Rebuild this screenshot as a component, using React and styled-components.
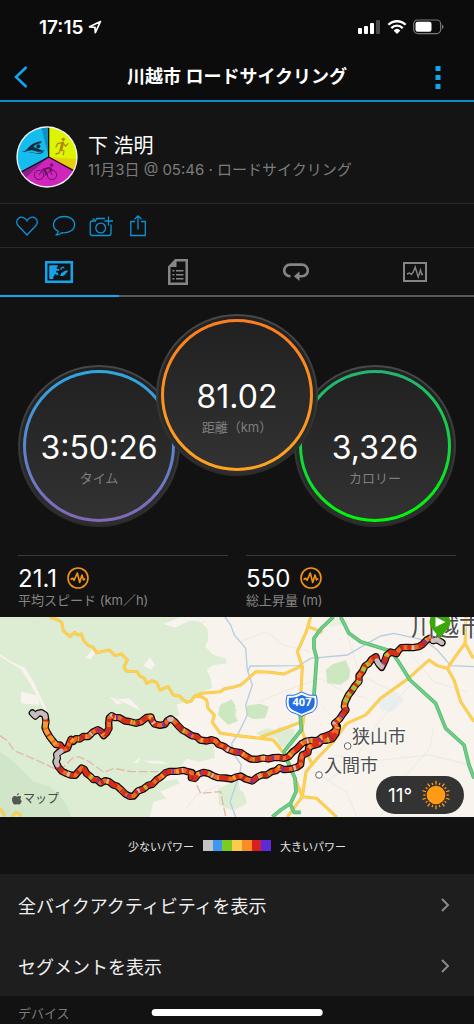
import React, { useState } from "react";
import styled, { createGlobalStyle } from "styled-components";

const routeUpper =
  "M1326,83 L1312,74 1299,77 1291,69 1280,75 1268,88 1257,95 1240,98 1222,97 1204,98 1194,108 1190,116 1172,111 1160,121 1155,136 1145,157 1137,148 1131,137 1128,125 1115,133 1107,145 1095,153 1087,170 1077,182 1077,199 1065,212 1055,228 1045,241 1035,262 1033,275 1038,285 1028,298 1020,310 1012,318 1004,325 1010,337 1005,348 993,357 980,362 965,367 952,377 935,376 917,379 905,386 892,400 878,411 866,425 852,430 835,427 820,428 805,432 790,429 770,433 752,432 737,423 722,413 702,410 685,404 672,394 655,388 647,378 635,374 620,378 600,375 590,365 575,362 560,352 547,345 535,333 524,320 512,311 502,317 495,328 480,331 463,327 456,317 453,306 440,307 424,320 408,325 390,320 375,318 358,308 345,308 335,302 328,308 326,325 327,340 320,353 311,362 303,350 293,344 279,351 265,365 250,364 240,372 228,371 220,379 213,373 208,385 202,400 190,404";
const routeSpur =
  "M190,404 L180,390 168,389 158,377 149,365 140,350 135,338 138,320 135,300 124,293 114,295 106,303 97,294";
const routeLower =
  "M190,404 L177,411 170,418 172,430 168,440 175,456 186,469 198,475 212,480 226,481 235,470 245,459 253,463 260,476 272,485 280,494 291,494 302,504 315,497 327,500 340,510 352,514 364,525 376,537 389,544 401,543 414,528 430,522 444,511 457,508 470,494 484,485 497,473 510,469 530,469 550,466 563,470 576,473 574,488 585,490 594,478 610,472 625,475 640,483 655,488 675,489 695,492 708,486 722,483 737,492 757,498 772,486 785,480 800,480 815,470 828,467 838,458 852,464 872,462 890,457 902,449 904,430 907,420 924,413 926,397 940,391 955,387 965,376 980,376 997,371 1008,355 1012,335";

const roadsYellow = [
  "M150,6 L172,14 185,22 190,47 210,65 224,52 232,60 244,57 250,75 265,92 280,97 290,113 328,105 345,122 365,117 382,135 372,155 378,168 412,170 418,182 432,189 440,205 455,197 470,202 480,225 505,215 520,240 536,242 560,262 574,258 582,245 604,235 662,230 672,222 702,216 722,210 737,198 767,170 802,171 852,177 907,152",
  "M586,243 L606,246 620,255 624,280 643,300 637,322 660,354 702,361 780,370 820,375 840,400 862,430 883,485 907,545",
  "M932,6 L917,55 892,110 907,155 903,230 912,300 906,345 917,380 925,425 936,445",
  "M925,35 L967,52",
  "M780,367 L840,345 907,320",
  "M1040,325 L1097,300 1142,250 1222,193 1287,135 1312,152 1342,160 1362,130 1395,85 1398,6",
  "M1395,85 L1420,130",
  "M1342,160 L1362,195 1382,260 1422,320",
  "M1040,325 L1000,380 952,430 918,470 907,545 862,606",
  "M907,545 L950,550 1010,606",
  "M0,580 L15,603",
  "M36,606 L48,592 65,602",
];

const roadsGreen = [
  "M1000,6 L962,42 942,70 942,100 950,130 942,240",
  "M900,290 L904,345 852,410 867,450 885,490 888,530 872,565 842,585 817,606",
  "M1022,6 L1047,55 1082,80 1172,108 1192,135 1230,195 1307,265 1337,340 1392,390 1407,450 1422,490",
  "M872,570 L882,592 902,592",
];

const rivers = [
  "M675,6 L692,30 703,60 737,100 742,165 757,210 737,270 742,300 715,355 695,385 700,415 724,450 718,480 690,560 707,606",
  "M744,170 L750,153 897,152 932,130 1042,120 1102,85 1142,63 1182,55 1272,75 1312,105 1352,152 1422,155",
];

const lanes = [
  "M85,6 L160,50 130,70 90,90 95,140 78,160",
  "M215,228 L270,265 335,245 380,270 430,290",
  "M480,50 L560,30 620,20",
  "M560,580 L590,540 660,510",
  "M720,80 L800,50 850,90 930,110",
  "M780,260 L850,230 960,190 1030,230 1100,250",
  "M1042,60 L1080,180 1200,240",
  "M962,270 L1020,330",
  "M1000,420 L1100,440 1290,420 1410,450",
  "M980,500 L1060,440 1130,330 1230,210",
  "M1140,606 L1200,500 1290,400 1300,340",
  "M940,470 L1040,530 1070,606",
  "M1220,100 L1300,200 1400,230",
  "M1260,120 L1300,45 1350,6",
];

const powerLayers = [
  { color: "#ee6a22", dash: "none", offset: 0 },
  { color: "#d92b1a", dash: "20 11 9 16 30 14", offset: 0 },
  { color: "#f7a531", dash: "6 57 5 43 8 81", offset: 11 },
  { color: "#a92a33", dash: "5 91 7 63", offset: 30 },
  { color: "#c4c4c9", dash: "4 112 6 145", offset: 17 },
  { color: "#6a33c8", dash: "5 103 5 157", offset: 52 },
  { color: "#8ccf2b", dash: "4 231 4 189", offset: 40 },
];

const swatches = ["#c4c4c6", "#3b98f4", "#7ecb1f", "#fccb4a", "#fb8c24", "#da1f22", "#5b2bd8"];

const dials = [
  { value: "3:50:26", label: "タイム", from: "#2ea6e0", to: "#8467b8" },
  { value: "81.02", label: "距離（km）", from: "#fd7d20", to: "#ffa41f", raised: true },
  { value: "3,326", label: "カロリー", from: "#24b472", to: "#00f808" },
];

const stats = [
  { value: "21.1", label: "平均スピード (km／h)" },
  { value: "550", label: "総上昇量 (m)" },
];

const links = ["全バイクアクティビティを表示", "セグメントを表示"];

function StatusIcons() {
  return (
    <svg width="86" height="16" viewBox="0 0 86 16" aria-hidden="true">
      <g fill="#fff">
        <rect x="0" y="9" width="4" height="6" rx="1" />
        <rect x="6" y="7" width="4" height="8" rx="1" />
        <rect x="12" y="4" width="4" height="11" rx="1" />
        <rect x="18" y="1" width="4" height="14" rx="1" opacity="0.25" />
        <path d="M39 15l-3.400-3.600a5 5 0 0 1 6.800 0z" />
      </g>
      <g fill="none" stroke="#fff" strokeWidth="2.3">
        <path d="M30.4 5.8a12.2 12.2 0 0 1 17.2 0" />
        <path d="M33.3 9.1a8 8 0 0 1 11.4 0" />
      </g>
      <rect x="55.7" y="1" width="27" height="13.6" rx="4" fill="none" stroke="#777" strokeWidth="1.2" />
      <rect x="57.5" y="2.8" width="16" height="10" rx="2" fill="#fff" />
      <path d="M84 5.5v4.6c2-.8 2-3.800 0-4.600z" fill="#777" />
    </svg>
  );
}

function Avatar() {
  return (
    <AvatarSvg viewBox="48 46 186 186" role="img" aria-label="下 浩明">
      <defs>
        <clipPath id="face">
          <circle cx="141" cy="139" r="88" />
        </clipPath>
      </defs>
      <circle cx="141" cy="139" r="92" fill="#f4f4f4" />
      <g clipPath="url(#face)">
        <path d="M146 139V40H40v156z" fill="#14bdee" />
        <path d="M146 139V40h-24z" fill="#0f8fc8" />
        <path d="M146 139V40h100v152z" fill="#dcf505" />
        <path d="M146 139l100 8v45z" fill="#e8cf0c" />
        <path d="M146 139L40 196v50h210v-54z" fill="#cf25bb" />
        <path d="M146 139L40 196l20 20z" fill="#8d1d8c" />
        <path d="M146 40v99L50 191M146 139l90 49" fill="none" stroke="#111" strokeWidth="4" />
      </g>
      <path
        d="M64 124c10 0 14-5 22-14 10-11 24-17 40-18l-4 6c-10 1-17 5-22 11 10 2 22 11 35 11-14 7-26 2-34 0-12-4-22 6-37 4zM84 127c10-4 18 0 28 0 8 0 14-3 20-3-8 7-20 6-27 4-8-2-12 0-21-1z"
        fill="#122b3c"
      />
      <circle cx="115" cy="107" r="6" fill="#122b3c" />
      <g fill="none" stroke="#b38a08" strokeLinecap="round" strokeLinejoin="round">
        <path d="M188 97l-5 20" strokeWidth="9" />
        <path d="M185 96l-12 3-5 10M191 99l6 8 7-8M183 117l9 4-2 11M181 117l-4 10-9 3" strokeWidth="4" />
      </g>
      <circle cx="190" cy="86" r="5" fill="#b38a08" />
      <g fill="none" stroke="#641263" strokeWidth="3">
        <circle cx="117" cy="193" r="14" />
        <circle cx="156" cy="193" r="14" />
        <path d="M117 193l12-17 10 15M156 193l-8-19" />
        <path d="M149 171l-19 5 9 8-2 10M149 171l8 8" strokeWidth="5" strokeLinejoin="round" />
      </g>
      <circle cx="155" cy="163" r="5" fill="#641263" />
    </AvatarSvg>
  );
}

function HeartIcon() {
  return (
    <LineIcon viewBox="0 0 24 24">
      <path d="M12 21L3.200 11.800C1 9.500 1.300 6.300 3.300 4.500C5.800 2.300 9.800 2.800 12 6.700C14.200 2.800 18.200 2.300 20.700 4.500C22.700 6.300 23 9.500 20.800 11.800Z" />
    </LineIcon>
  );
}

function CommentIcon() {
  return (
    <LineIcon viewBox="0 0 24 24">
      <path d="M3.600 21.200c1.700-.9 2.600-2.200 2.700-3.900C3.200 15.800 1.500 13.400 1.500 10.700 1.500 6 6.200 2.500 12.200 2.500S22.600 6 22.600 10.700s-4.500 8.100-10.400 8.100c-.8 0-1.600 0-2.400-.2-1.600 1.600-3.600 2.500-6.200 2.600z" />
    </LineIcon>
  );
}

function CameraIcon() {
  return (
    <LineIcon viewBox="0 0 24 24">
      <path d="M16 4.500H7.800L6.300 7H3.500A2.300 2.300 0 0 0 1.200 9.300v9.900a2.300 2.300 0 0 0 2.300 2.300h16.200a2.300 2.300 0 0 0 2.300-2.300V10.500M19.500 2.500v9M15.500 7h8.500M3.500 5.200h2.500" />
      <circle cx="11.700" cy="14" r="4.900" />
    </LineIcon>
  );
}

function ShareIcon() {
  return (
    <LineIcon viewBox="0 0 24 24">
      <path d="M9 7.500H4.800v14h14.500v-14H15M12 15.500V2M8.500 5.300L12 1.800l3.500 3.500" />
    </LineIcon>
  );
}

function MapTabIcon() {
  return (
    <svg width="28" height="22" viewBox="0 0 28 22" fill="currentColor">
      <path d="M0 0h28v22H0zM2.500 2.500v17h23v-17z" fillRule="evenodd" />
      <path d="M4.200 4.200h8.600v1.600h-1v2.200h2.400v1.800h-3v1.800h1.600v1.600h-3.400v2h-1v2.800H4.200z" />
      <path d="M15.500 7c1-.9 2-1.300 3.800-1.200v1.500h-2.500v1.500h-1.600zM16 13.500v-1.800h1.600l1.200-1.400 2.200-.6 1.600-.8v2l-1.500 1-1 1.500-2 1.600h-2.600c-.7 0-.7-1.400.5-1.500zM11.500 12.500h1.800v1.700h-1.800z" />
    </svg>
  );
}

function ReportTabIcon() {
  return (
    <svg width="20" height="26" viewBox="0 0 20 26" fill="currentColor">
      <path d="M7 0h13v26H0V7.500zM8.500 2.500V8H2.500v15.500h15V2.500z" fillRule="evenodd" />
      <path d="M1 7.500L7.500 1v6.500zM4.500 11h2v1.500h-2zM8 11h7.500v1.500H8zM4.500 15h2v1.500h-2zM8 15h7.500v1.500H8zM4.500 19h2v1.500h-2zM8 19h7.500v1.500H8z" />
    </svg>
  );
}

function LapTabIcon() {
  return (
    <svg width="26" height="18" viewBox="0 0 26 18">
      <path d="M7.500 13.200H7A5.800 5.800 0 0 1 7 1.600h12a5.800 5.800 0 0 1 0 11.600h-3" fill="none" stroke="currentColor" strokeWidth="2.600" />
      <path d="M16.500 8.500v9.500L10.800 13.200z" fill="currentColor" />
    </svg>
  );
}

function ChartTabIcon() {
  return (
    <svg width="24" height="20" viewBox="0 0 24 20" fill="none" stroke="currentColor">
      <rect x="1" y="1" width="22" height="18" strokeWidth="2" />
      <path d="M4 12l2.500-1 1.800 1.500 2-2.500 1.900-5 3 10 2.300-7 1.200 4.500L20 12" strokeWidth="1.400" />
    </svg>
  );
}

function PulseIcon() {
  return (
    <svg width="22" height="22" viewBox="0 0 22 22" fill="none" stroke="#f59314" aria-hidden="true">
      <circle cx="11" cy="11" r="10" strokeWidth="1.600" />
      <path d="M3.500 12.500l2.200-1.200 1.300 2L10.300 6l2.400 9.500L15 8l1.500 5 1.800-1.500" strokeWidth="1.600" strokeLinejoin="round" />
    </svg>
  );
}

function SunIcon() {
  const rays = Array.from({ length: 20 }, (_, i) => i * 18);
  return (
    <svg width="30" height="30" viewBox="-15 -15 30 30" aria-hidden="true">
      <circle r="9.300" fill="#ff9a14" />
      {rays.map((deg, i) => (
        <path key={deg} d={i % 2 ? "M0-10.500V-12.700" : "M0-10.500V-14.200"} stroke="#ff9a14" strokeWidth="1.300" transform={`rotate(${deg})`} />
      ))}
    </svg>
  );
}

function RouteMap() {
  return (
    <MapBox>
      <MapSvg viewBox="0 6 1422 600" preserveAspectRatio="xMidYMid slice" role="img" aria-label="ルートマップ">
        <rect width="1422" height="612" fill="#f8f4ed" />
        <g fill="#dcedd4">
          <path d="M0 6H540L490 28 560 15 600 20 622 40 625 75 615 95 640 120 676 130 682 145 640 150 620 165 632 190 636 220 600 232 560 262 530 268 555 280 540 300 520 306 560 345 615 372 640 385 645 428 600 440 560 432 540 455 515 460 500 480 490 500 530 492 540 505 480 530 500 550 460 560 450 606H0z" />
          <path d="M655 520l60-25 10 60-30 30-38-15z" />
          <path d="M702 510l30 25 10 30-40 20z" />
          <path d="M767 355l35-15 25 5 12-10 45 8-5 50-40 5-10-30-35 0z" />
          <path d="M702 280l10 5-5 20-8-5z" />
          <path d="M980 6h40l30 20-60 10z" opacity="0.5" />
        </g>
        <path d="M0 410l40 30 60 60 50 15 45 45 20 46H0z" fill="#d1e6c8" />
        <g fill="#cde7c0">
          <path d="M660 270l35-17 12 20-5 25 12 20-30 12-30-30z" />
          <path d="M977 165l20-17 40-12 14 30-4 25-25 18-40-4z" />
          <path d="M740 272l40-6 27 9-12 35-35 2-20-10z" />
        </g>
        <path d="M1132 250l50-20 30 25-35 35-35-5z" fill="#e9eeee" />
        <g fill="#f8f4ed">
          <path d="M0 118l40 25 35 15 25 40 42 90-10-4-40-75-28-45-64-40z" />
          <path d="M64 230l50 12 4 28-55-5z" />
          <path d="M255 130l20-25 12 10-15 18z" />
          <path d="M430 152l20-25 15 22-12 15z" />
          <path d="M328 245l30 8 30-3 20 20 20 22-30-15-25-14-22 6z" />
          <path d="M530 270l40-10 30 30-60 15z" />
          <path d="M400 443l20-15-6 16zM430 437h50l30 10-60-2zM490 26l60-14 25 2-50 24z" />
        </g>
        <g fill="none" stroke="#e4e2dc" strokeWidth="2">
          {lanes.map((d) => <path key={d} d={d} />)}
        </g>
        <path d="M0 362l22 15 20 30 60 25 60 28 30-5 25-25 20-5 30 15 45 32 30-12 50 10 100 0 20-10 60 10 30 65 60-5 15 75" fill="none" stroke="#e2b8a8" strokeWidth="4" strokeDasharray="26 8" />
        <g fill="none" stroke="#b9cde2" strokeWidth="4">
          {rivers.map((d) => <path key={d} d={d} />)}
        </g>
        <g fill="none" strokeLinejoin="round">
          <g stroke="#efc063" strokeWidth="9">
            {roadsYellow.map((d) => <path key={d} d={d} />)}
          </g>
          <g stroke="#ffd34a" strokeWidth="6">
            {roadsYellow.map((d) => <path key={d} d={d} />)}
          </g>
          <g stroke="#50b56a" strokeWidth="11">
            {roadsGreen.map((d) => <path key={d} d={d} />)}
          </g>
          <g stroke="#6fce88" strokeWidth="7">
            {roadsGreen.map((d) => <path key={d} d={d} />)}
          </g>
        </g>
        <g fill="#fff" stroke="#666" strokeWidth="3">
          <circle cx="1043" cy="393" r="10" />
          <circle cx="957" cy="480" r="10" />
        </g>
        <g fill="none" strokeLinejoin="round">
          <path d={routeUpper + routeSpur + routeLower} stroke="#0b0b0b" strokeWidth="22" strokeLinecap="round" />
          {powerLayers.map((layer) => (
            <path
              key={layer.color}
              d={routeUpper + routeSpur + routeLower}
              stroke={layer.color}
              strokeWidth="14"
              strokeDasharray={layer.dash}
              strokeDashoffset={layer.offset}
            />
          ))}
          <g stroke="#c0bfc3" strokeWidth="14" strokeLinecap="round">
            <path d="M97 294L106 303 114 295 124 293 135 300 136 307M184 408L170 418 172 430 168 440 172 450M1326 83L1312 74 1299 77M1145 155L1137 148 1131 137M508 313L514 313" />
          </g>
          <path d="M1107 145L1095 153 1087 170M1077 199L1055 228 1045 241 1035 262 1033 275" stroke="#a9bf2b" strokeWidth="14" strokeDasharray="10 8 14 12" />
          <path d="M138 320L135 338 140 350 149 365 168 389" stroke="#f79a2d" strokeWidth="14" strokeDasharray="18 5" />
        </g>
        <path d="M861 241q22 4 44-10 22 14 44 10 9 38-12 50-16 5-32 13-16-8-32-13-21-12-12-50z" fill="#fff" stroke="#256fe6" strokeWidth="3" />
        <path d="M867 248q20 2 38-9 18 11 38 9 5 28-11 37-13 6-27 12-14-6-27-12-16-9-11-37z" fill="#256fe6" />
      </MapSvg>
      <City $x={411} $y={1} $size={24}>川越市</City>
      <City $x={352} $y={110} $size={18}>狭山市</City>
      <City $x={324} $y={139} $size={18}>入間市</City>
      <Shield>407</Shield>
      <Pin viewBox="0 0 24 24">
        <path d="M12 22C8 14 1.500 12 1.500 4.500A10.500 10.500 0 0 1 3 0h18a10.500 10.500 0 0 1 1.500 4.500C22.500 12 16 14 12 22z" fill="#3aa70a" />
        <path d="M7.500 0v10L17.500 5z" fill="#fff" />
      </Pin>
      <Credit>
        <svg width="10" height="12" viewBox="0 0 10 12" fill="#555" aria-hidden="true">
          <path d="M6.800 0c.1 1.300-.8 2.500-2 2.600C4.700 1.400 5.700.2 6.800 0zM9.300 4.100C8 5 8.100 7.300 9.800 8c-.6 1.800-1.700 3.600-2.800 3.600-.7 0-1-.4-1.900-.4s-1.200.4-1.900.4C1.600 11.600 0 8.800 0 6.400c0-2.200 1.400-3.400 2.800-3.400.9 0 1.600.6 2.300.6.600 0 1.400-.6 2.400-.6.800 0 1.400.4 1.800 1.100z" />
        </svg>
        マップ
      </Credit>
      <Weather>
        11°
        <SunIcon />
      </Weather>
    </MapBox>
  );
}

const tabs = [
  { name: "概要", icon: <MapTabIcon /> },
  { name: "統計", icon: <ReportTabIcon /> },
  { name: "ラップ", icon: <LapTabIcon /> },
  { name: "グラフ", icon: <ChartTabIcon /> },
];

function App() {
  const [activeTab, setActiveTab] = useState(0);

  return (
    <Screen>
      <GlobalStyle />
      <Header>
        <StatusBar>
          <Clock>
            17:15
            <svg width="14" height="14" viewBox="0 0 14 14" fill="none" stroke="#fff" strokeWidth="1.700" strokeLinejoin="round" aria-hidden="true">
              <path d="M12.500 1.500L1.500 6.800l5.500.6.300 5.300z" />
            </svg>
          </Clock>
          <StatusIcons />
        </StatusBar>
        <NavBar>
          <NavButton aria-label="戻る">
            <svg width="14" height="22" viewBox="0 0 14 22" fill="none" stroke="#12a5ee" strokeWidth="2.600">
              <path d="M12.500 1L2 11l10.500 10" />
            </svg>
          </NavButton>
          <Title>川越市 ロードサイクリング</Title>
          <NavButton aria-label="メニュー" $end>
            <svg width="6" height="24" viewBox="0 0 6 24" fill="#12a5ee">
              <path d="M.500 1h5v5h-5zM.500 10h5v5h-5zM.500 19h5v5h-5z" />
            </svg>
          </NavButton>
        </NavBar>
      </Header>

      <Profile>
        <Avatar />
        <div>
          <UserName>下 浩明</UserName>
          <Subtitle>11月3日 @ 05:46 · ロードサイクリング</Subtitle>
        </div>
      </Profile>

      <Actions>
        <IconButton aria-label="いいね"><HeartIcon /></IconButton>
        <IconButton aria-label="コメント"><CommentIcon /></IconButton>
        <IconButton aria-label="写真を追加"><CameraIcon /></IconButton>
        <IconButton aria-label="共有"><ShareIcon /></IconButton>
      </Actions>

      <Tabs role="tablist">
        {tabs.map((tab, index) => (
          <Tab
            key={tab.name}
            role="tab"
            aria-label={tab.name}
            aria-selected={activeTab === index}
            $active={activeTab === index}
            onClick={() => setActiveTab(index)}
          >
            {tab.icon}
          </Tab>
        ))}
      </Tabs>

      <Dials>
        {dials.map((dial) => (
          <Dial key={dial.label} $raised={dial.raised}>
            <DialFace $from={dial.from} $to={dial.to}>
              <DialValue>{dial.value}</DialValue>
              <DialLabel>{dial.label}</DialLabel>
            </DialFace>
          </Dial>
        ))}
      </Dials>

      <Stats>
        {stats.map((stat) => (
          <Stat key={stat.label}>
            <StatValue>
              {stat.value}
              <PulseIcon />
            </StatValue>
            <StatLabel>{stat.label}</StatLabel>
          </Stat>
        ))}
      </Stats>

      <RouteMap />

      <Legend>
        <span>少ないパワー</span>
        <Swatches>
          {swatches.map((color) => <Swatch key={color} $color={color} />)}
        </Swatches>
        <span>大きいパワー</span>
      </Legend>

      <nav>
        {links.map((text) => (
          <ListLink key={text} href="#">
            {text}
            <svg width="9" height="14" viewBox="0 0 9 14" fill="none" stroke="#8a8a8a" strokeWidth="2" aria-hidden="true">
              <path d="M1 1l6 6-6 6" />
            </svg>
          </ListLink>
        ))}
      </nav>

      <SectionTitle>デバイス</SectionTitle>
      <HomeBar />
    </Screen>
  );
}

const GlobalStyle = createGlobalStyle`
  * {
    box-sizing: border-box;
  }
  body {
    margin: 0;
    background: #121212;
    color: #fff;
    font-family: Inter, "Noto Sans CJK JP", sans-serif;
  }
  button {
    padding: 0;
    border: none;
    background: none;
    cursor: pointer;
  }
  svg {
    display: block;
    flex-shrink: 0;
  }
`;

const Screen = styled.div`
  min-height: 100vh;
  overflow: hidden;
  background: #121212;
`;

const Header = styled.header`
  background: #0c0c0c;
  border-bottom: 2px solid #0f8dcb;
`;

const StatusBar = styled.div`
  display: flex;
  align-items: center;
  justify-content: space-between;
  height: 54px;
  padding: 0 30px 0 39px;
`;

const Clock = styled.div`
  display: flex;
  align-items: center;
  gap: 5px;
  font-size: 19px;
  font-weight: 600;
`;

const NavBar = styled.div`
  display: grid;
  grid-template-columns: 60px 1fr 60px;
  align-items: center;
  height: 46px;
`;

const NavButton = styled.button`
  display: flex;
  align-items: center;
  justify-content: ${(props) => (props.$end ? "flex-end" : "flex-start")};
  height: 44px;
  padding: 0 33px 0 14px;
`;

const Title = styled.h1`
  margin: 0;
  font-size: 18px;
  line-height: 28px;
  font-weight: 600;
  text-align: center;
`;

const Profile = styled.section`
  display: flex;
  align-items: center;
  gap: 10px;
  height: 102px;
  padding: 8px 16px 0;
  border-bottom: 1px solid #292929;
  background: #141414;
`;

const AvatarSvg = styled.svg`
  width: 62px;
  height: 62px;
`;

const UserName = styled.h2`
  margin: 0;
  font-size: 20px;
  line-height: 26px;
  font-weight: 400;
`;

const Subtitle = styled.p`
  margin: 0;
  color: #7c7c7c;
  font-size: 15px;
  line-height: 22px;
`;

const Actions = styled.div`
  display: flex;
  align-items: center;
  gap: 13px;
  height: 44px;
  padding: 0 15px;
  border-bottom: 1px solid #292929;
`;

const IconButton = styled.button`
  width: 24px;
  height: 24px;
  color: #0f92d6;
`;

const LineIcon = styled.svg`
  width: 24px;
  height: 24px;
  fill: none;
  stroke: currentColor;
  stroke-width: 1.3;
`;

const Tabs = styled.div`
  display: grid;
  grid-template-columns: repeat(4, 1fr);
  height: 49px;
`;

const Tab = styled.button`
  display: flex;
  align-items: center;
  justify-content: center;
  color: ${(props) => (props.$active ? "#12a5ee" : "#858585")};
  border-bottom: 2px solid ${(props) => (props.$active ? "#12a5ee" : "#5a5a5a")};
`;

const Dials = styled.section`
  display: flex;
  justify-content: center;
  align-items: flex-start;
  padding: 17px 0 28px;
`;

const Dial = styled.div`
  position: relative;
  z-index: ${(props) => (props.$raised ? 1 : 0)};
  width: 162px;
  height: 162px;
  margin: ${(props) => (props.$raised ? "0 -24px" : "51px 0 0")};
  padding: 3px;
  border: 2px solid transparent;
  border-radius: 50%;
  background:
    linear-gradient(#1f2122, #2e2e2e) padding-box,
    linear-gradient(#484848, #2a2a2a) border-box;
`;

const DialFace = styled.div`
  display: flex;
  flex-direction: column;
  align-items: center;
  height: 100%;
  padding-top: 54px;
  border: 3px solid transparent;
  border-radius: 50%;
  background:
    linear-gradient(#212121, #323232) padding-box,
    linear-gradient(${(props) => props.$from}, ${(props) => props.$to}) border-box;
`;

const DialValue = styled.div`
  font-size: 32px;
  line-height: 42px;
`;

const DialLabel = styled.div`
  color: #7e7e7e;
  font-size: 13px;
  line-height: 18px;
`;

const Stats = styled.section`
  display: grid;
  grid-template-columns: 1fr 1fr;
  gap: 18px;
  padding: 0 18px 7px;
`;

const Stat = styled.div`
  padding-top: 10px;
  border-top: 1px solid #3a3a3a;
`;

const StatValue = styled.div`
  display: flex;
  align-items: center;
  gap: 10px;
  height: 24px;
  font-size: 24px;
`;

const StatLabel = styled.div`
  color: #858585;
  font-size: 13px;
  line-height: 20px;
`;

const MapBox = styled.section`
  position: relative;
  height: 200px;
  overflow: hidden;
`;

const MapSvg = styled.svg`
  width: 100%;
  height: 100%;
`;

const City = styled.span`
  position: absolute;
  left: ${(props) => props.$x}px;
  top: ${(props) => props.$y}px;
  color: #4d4d4d;
  font-size: ${(props) => props.$size}px;
  line-height: 20px;
  white-space: nowrap;
  text-shadow: 0 0 2px #fff, 0 0 2px #fff;
`;

const Shield = styled.span`
  position: absolute;
  left: 286px;
  top: 77px;
  width: 32px;
  font-family: "Open Sans", sans-serif;
  font-size: 11px;
  line-height: 16px;
  font-weight: 700;
  text-align: center;
`;

const Pin = styled.svg`
  position: absolute;
  left: 428px;
  top: 0;
  width: 24px;
  height: 24px;
`;

const Credit = styled.span`
  position: absolute;
  left: 12px;
  bottom: 9px;
  display: flex;
  align-items: center;
  gap: 1px;
  color: #4a4a4a;
  font-size: 12px;
  line-height: 18px;
`;

const Weather = styled.div`
  position: absolute;
  right: 10px;
  bottom: 3px;
  display: flex;
  align-items: center;
  justify-content: space-between;
  width: 88px;
  height: 38px;
  padding: 0 13px 0 12px;
  border-radius: 19px;
  background: #333;
  font-size: 19px;
`;

const Legend = styled.div`
  display: flex;
  align-items: center;
  justify-content: center;
  gap: 9px;
  height: 57px;
  color: #e4e4e4;
  font-size: 11px;
`;

const Swatches = styled.div`
  display: grid;
  grid-template-columns: repeat(7, 1fr);
  width: 68px;
  height: 11px;
`;

const Swatch = styled.i`
  background: ${(props) => props.$color};
`;

const ListLink = styled.a`
  display: flex;
  align-items: center;
  justify-content: space-between;
  height: 61px;
  padding: 0 24px 0 18px;
  background: #1e1e1e;
  color: #efefef;
  font-size: 18px;
  text-decoration: none;
`;

const SectionTitle = styled.h3`
  margin: 0;
  padding: 6px 18px 0;
  color: #7c7c7c;
  font-size: 13px;
  line-height: 22px;
  font-weight: 400;
`;

const HomeBar = styled.div`
  position: fixed;
  left: 50%;
  bottom: 8px;
  width: 36%;
  height: 7px;
  border-radius: 4px;
  background: #fff;
  transform: translateX(-50%);
`;

export default App;
